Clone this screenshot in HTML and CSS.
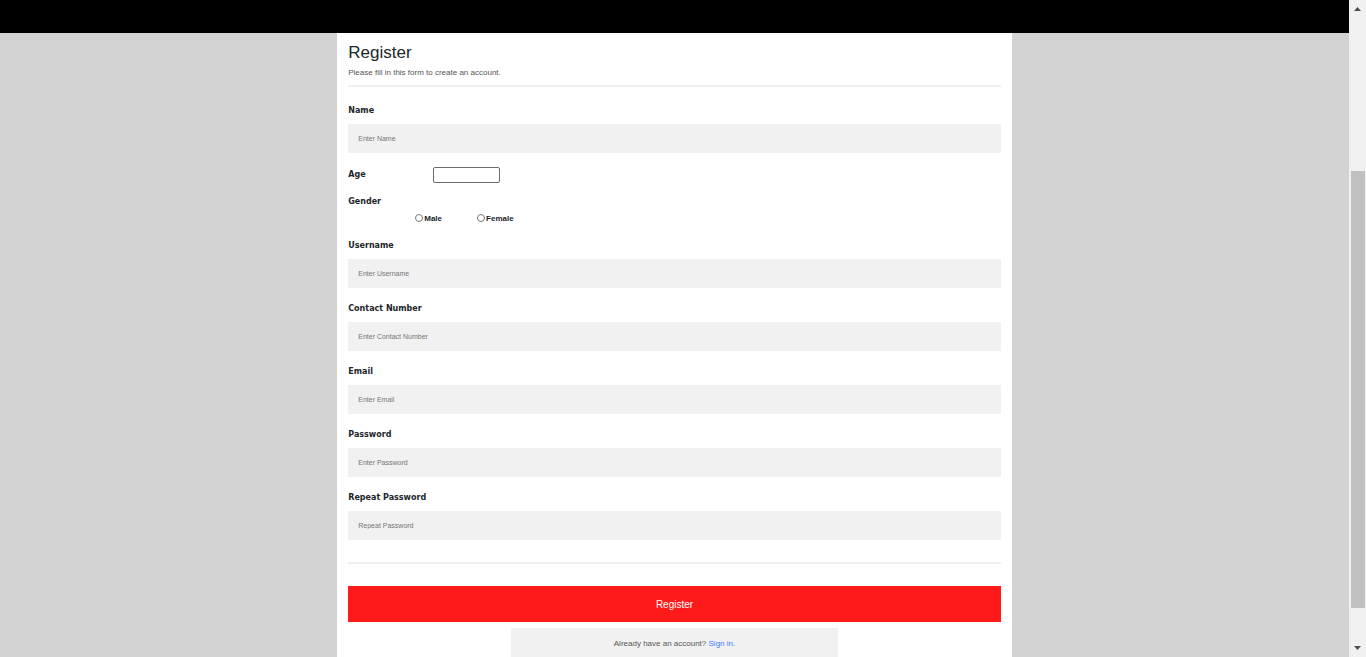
FILE: index.html
```html
<!DOCTYPE html>
<html lang="en">
<head>
<meta charset="utf-8">
<meta name="viewport" content="width=device-width, initial-scale=1">
<title>Register</title>
<link rel="stylesheet" href="styles.css">
</head>
<body>
<div class="viewport">
  <div class="page">
    <header class="topbar"></header>
    <main class="card">
      <form class="form">
        <h1 class="title">Register</h1>
        <p class="intro">Please fill in this form to create an account.</p>
        <hr class="rule">
        <div class="fields">
          <div class="field">
            <label class="label" for="name">Name</label>
            <input class="input" id="name" type="text" placeholder="Enter Name">
          </div>
          <div class="age-row">
            <label class="label age-label" for="age">Age</label>
            <input class="age" id="age" type="text">
          </div>
          <fieldset class="gender">
            <legend class="label gender-label">Gender</legend>
            <div class="options">
              <label class="option"><input class="radio" type="radio" name="gender" value="male">Male</label>
              <label class="option"><input class="radio" type="radio" name="gender" value="female">Female</label>
            </div>
          </fieldset>
          <div class="field">
            <label class="label" for="username">Username</label>
            <input class="input" id="username" type="text" placeholder="Enter Username">
          </div>
          <div class="field">
            <label class="label" for="contact">Contact Number</label>
            <input class="input" id="contact" type="text" placeholder="Enter Contact Number">
          </div>
          <div class="field">
            <label class="label" for="email">Email</label>
            <input class="input" id="email" type="text" placeholder="Enter Email">
          </div>
          <div class="field">
            <label class="label" for="password">Password</label>
            <input class="input" id="password" type="password" placeholder="Enter Password">
          </div>
          <div class="field">
            <label class="label" for="repeat">Repeat Password</label>
            <input class="input" id="repeat" type="password" placeholder="Repeat Password">
          </div>
        </div>
        <hr class="rule rule-end">
        <button class="submit" type="submit">Register</button>
      </form>
      <p class="signin">Already have an account?&nbsp;<a class="link" href="#">Sign in.</a></p>
    </main>
  </div>
  <div class="scrollbar" aria-hidden="true">
    <svg class="arrow" viewBox="0 0 17 17"><path d="M5 11L8.500 7L12 11Z"/></svg>
    <div class="track"><div class="thumb"></div></div>
    <svg class="arrow" viewBox="0 0 17 17"><path d="M5 6L8.500 10L12 6Z"/></svg>
  </div>
</div>
</body>
</html>
```
FILE: styles.css
```css
* {
  box-sizing: border-box;
}

body {
  margin: 0;
  background: #d3d3d3;
  color: #212529;
  font-family: "Liberation Sans", Arial, sans-serif;
  font-size: 8px;
  line-height: 12px;
}

.viewport {
  display: flex;
  height: 100vh;
  overflow: hidden;
}

.page {
  flex: 1;
  overflow: hidden;
}

.topbar {
  height: 33px;
  background: #000;
}

.card {
  width: 50%;
  margin: 0 auto;
  padding: 9px 11px;
  background: #fff;
}

.title {
  margin: 0;
  font-size: 17px;
  font-weight: 400;
  line-height: 22px;
}

.intro {
  margin: 3px 0 6px;
  color: #555;
}

.rule {
  height: 2px;
  margin: 0;
  border: 0;
  background: #efefef;
}

.fields {
  display: flex;
  flex-direction: column;
  gap: 13px;
  padding: 16px 0 22px;
}

.field {
  display: flex;
  flex-direction: column;
  gap: 5px;
}

.label {
  padding: 0;
  font-family: "DejaVu Sans", Verdana, sans-serif;
  font-size: 8px;
  font-weight: 700;
  line-height: 16px;
}

.input {
  width: 100%;
  height: 29px;
  padding: 0 10px;
  border: 0;
  background: #f1f1f1;
  font-family: inherit;
  font-size: 7px;
}

.input::placeholder {
  color: #757575;
}

.age-row {
  display: flex;
  align-items: flex-end;
  height: 17px;
}

.age-label {
  width: 85px;
}

.age {
  width: 67px;
  height: 16px;
  padding: 0 2px;
  border: 1px solid #6b6b6b;
  border-radius: 2px;
  background: #fff;
  font-family: inherit;
  font-size: 8px;
}

.gender {
  margin: 0;
  padding: 0;
  border: 0;
}

.gender-label {
  line-height: 12px;
}

.options {
  display: flex;
  gap: 35px;
  padding: 4px 0 0 67px;
}

.option {
  display: flex;
  align-items: flex-start;
  gap: 1px;
  font-weight: 700;
  line-height: 13px;
}

.radio {
  width: 8px;
  height: 8px;
  margin: 2px 0 0;
}

.rule-end {
  margin-bottom: 22px;
}

.submit {
  display: block;
  width: 100%;
  height: 36px;
  border: 0;
  background: #ff1a1a;
  color: #fff;
  font-family: inherit;
  font-size: 10px;
}

.signin {
  width: 50%;
  margin: 6px auto 0;
  padding: 10px 0;
  background: #f1f1f1;
  color: #555;
  text-align: center;
}

.link {
  color: #3b7cff;
  text-decoration: none;
}

.scrollbar {
  display: flex;
  flex-direction: column;
  width: 17px;
  background: #f1f1f1;
}

.arrow {
  width: 17px;
  height: 17px;
  fill: #505050;
}

.track {
  flex: 1;
  padding: 154px 1px 0 2px;
}

.thumb {
  height: 437px;
  background: #c1c1c1;
}
```
